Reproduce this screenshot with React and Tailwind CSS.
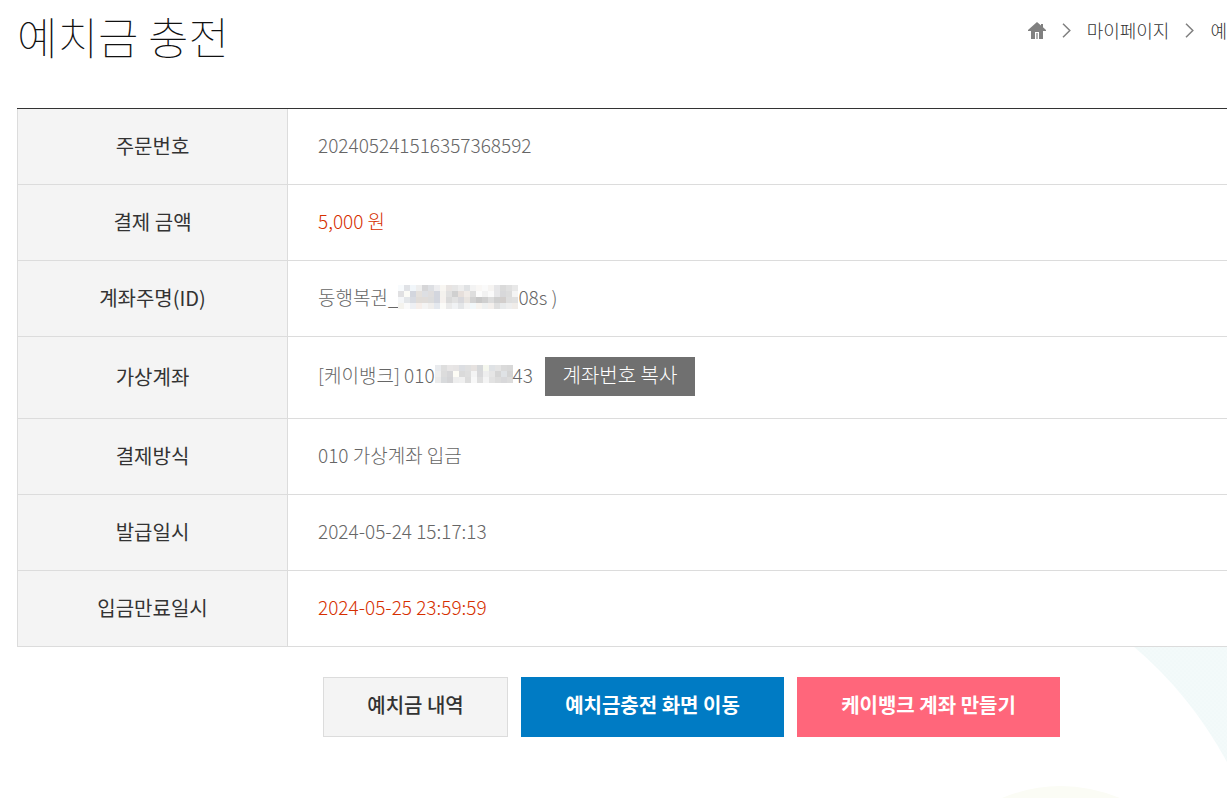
import React from "react";

const NAME_MASK = [
  "#f8fbfd #e0e2e6 #f1f6fa #eeeeee #d6d6d8 #dddfe3 #ededef #f8f6f2 #e8e4e2 #e6e6e6 #eeeeee #e0e2e4 #f3f3f3 #f9f7f5 #fafafa #f6f4f2 #e6e6e8 #dadada #e0e0e0 #e8e8e8",
  "#e0e0e2 #fbfbf6 #d3d6de #e4e0dc #dddfe3 #dfdddd #d3d6de #f4f2ee #e0e0e0 #d0d0d0 #e6dfdb #f0ebe7 #dedede #fcfcfc #f2f2f2 #fafafa #e6e6e8 #d8d8da #dcdcdc #f4f4f4",
  "#f4f6f8 #e3e6e9 #d8dbe2 #e0dcd8 #e0dcd9 #dcdcdc #d3d6de #f5f1ee #dadada #e2e2e2 #d8d8dc #e8e4e0 #d2d2d2 #c8c8c8 #cfcfcf #dcdcdc #cfcfcf #d2cecc #dedede #e0e0e0",
  "#f4f3ee #fafafa #eef0f4 #f6eeea #f4f4f4 #f0eeec #e4e8ee #fbfbf8 #eaeaea #f0f2f4 #e4e6e8 #f4f4f4 #f2f8fa #f7f4f0 #eef0f0 #f3efec #dfdfdf #e8eaeb #eeeeee #f0ece8",
].map((row) => row.split(" "));

const ACCOUNT_MASK = [
  "#e9ebee #dedede #e8e6e6 #e6e4e4 #dcdee2 #e0e0e0 #e6e2e0 #d6d8da #f5f7ee #dfe2e5 #e4e4e4 #dadada #d8d8d8",
  "#efefef #dcdcdc #d6d6d8 #fdfcf5 #dadada #dedede #f4f4f4 #d8d8da #eeeeee #e6e6e6 #d5d5d5 #dfe2e5 #d4d4d4",
  "#ebebeb #d8dadc #d4d4d6 #eeeeee #f0f0f0 #dcdcdc #f8f8f8 #dedede #f4f4f4 #e2e2e2 #dcdcdc #d8d8da #dcdcdc",
].map((row) => row.split(" "));

function Mosaic({ cells }) {
  const w = cells[0].length * 6;
  const h = cells.length * 6;
  return (
    <svg width={w} height={h} viewBox={`0 0 ${w} ${h}`} shapeRendering="crispEdges" aria-hidden="true" className="shrink-0">
      {cells.map((row, y) =>
        row.map((fill, x) => <rect key={`${x}-${y}`} x={x * 6} y={y * 6} width="6" height="6" fill={fill} />)
      )}
    </svg>
  );
}

function Chevron() {
  return (
    <svg width="9" height="15" viewBox="0 0 9 15" fill="none" stroke="#808080" strokeWidth="1.5" aria-hidden="true">
      <path d="M1 .8 7.8 7.5 1 14.2" />
    </svg>
  );
}

function Row({ label, red, children }) {
  return (
    <tr className="h-[76px]">
      <th
        scope="row"
        className="w-[271px] border-x border-b border-[#dcdcdc] bg-[#f4f4f4] pb-0.5 text-center font-normal text-[#333]"
      >
        {label}
      </th>
      <td
        className={
          red
            ? "border-b border-[#dcdcdc] pb-[3px] pl-[30px] text-[19px] font-light text-[#d62f00]"
            : "border-b border-[#dcdcdc] pb-[3px] pl-[30px] text-[19px] font-light text-[#666]"
        }
      >
        {children}
      </td>
    </tr>
  );
}

export default function App() {
  return (
    <div className="relative min-h-screen overflow-hidden bg-white font-['Noto_Sans_CJK_KR','Noto_Sans',sans-serif] text-xl leading-7 text-[#333]">
      <svg className="absolute right-0 bottom-0" width="247" height="168" viewBox="0 0 247 168" aria-hidden="true">
        <defs>
          <pattern id="dots" width="4" height="4" patternUnits="userSpaceOnUse">
            <rect width="4" height="4" fill="#f3fafa" />
            <circle cx="1" cy="1" r="0.5" fill="#edf6f7" />
            <circle cx="3" cy="3" r="0.5" fill="#edf6f7" />
          </pattern>
        </defs>
        <path d="M153 16Q210 64 247 132V16Z" fill="url(#dots)" />
        <path d="M22 168Q80 144 140 168Z" fill="#fbfcf5" />
      </svg>

      <header className="flex justify-between pl-[17px]">
        <h1 className="mt-1.5 text-[44px] leading-[60px] font-thin text-[#111]">예치금 충전</h1>
        <nav aria-label="현재 위치" className="mt-4 flex h-7 items-center text-lg font-light">
          <a href="#home" aria-label="홈">
            <svg width="18" height="17" viewBox="0 0 18 17" fill="#808080" aria-hidden="true">
              <path d="M9 0 0 8v1h3v8h4v-7h4v7h4V9h3V8l-3-2.700V2h-2v1.500Z" />
              <path d="M8 11h2v6H8Z" fill="#b0b0b0" />
            </svg>
          </a>
          <span className="mx-4"><Chevron /></span>
          <a href="#mypage">마이페이지</a>
          <span className="mx-4"><Chevron /></span>
          <span>예</span>
        </nav>
      </header>

      <main className="relative mt-[42px]">
        <div className="pl-[17px]">
          <div className="border-t border-[#333]">
            <table className="w-full border-separate border-spacing-0">
              <tbody>
                <Row label="주문번호">202405241516357368592</Row>
                <Row label="결제 금액" red>5,000 원</Row>
                <Row label="계좌주명(ID)">
                  <div className="flex items-center">동행복권_<Mosaic cells={NAME_MASK} />08s )</div>
                </Row>
                <Row label="가상계좌">
                  <div className="flex items-baseline pt-5 pb-[19px]">
                    <span>[케이뱅크] 010</span>
                    <Mosaic cells={ACCOUNT_MASK} />
                    <span>43</span>
                    <button type="button" className="ml-3 h-[39px] w-[150px] bg-[#707070] pb-1 text-xl text-white">계좌번호 복사</button>
                  </div>
                </Row>
                <Row label="결제방식">010 가상계좌 입금</Row>
                <Row label="발급일시">2024-05-24 15:17:13</Row>
                <Row label="입금만료일시" red>2024-05-25 23:59:59</Row>
              </tbody>
            </table>
          </div>
        </div>
        <div className="mt-[30px] flex justify-center gap-[13px] pb-[61px] pl-39">
          <button type="button" className="h-[60px] w-[185px] border border-[#dcdcdc] bg-[#f4f4f4] pb-1 font-medium">예치금 내역</button>
          <button type="button" className="h-[60px] w-[263px] bg-[#007bc4] pb-1 font-bold text-white">예치금충전 화면 이동</button>
          <button type="button" className="h-[60px] w-[263px] bg-[#ff667b] pb-1 font-bold text-white">케이뱅크 계좌 만들기</button>
        </div>
      </main>
    </div>
  );
}
